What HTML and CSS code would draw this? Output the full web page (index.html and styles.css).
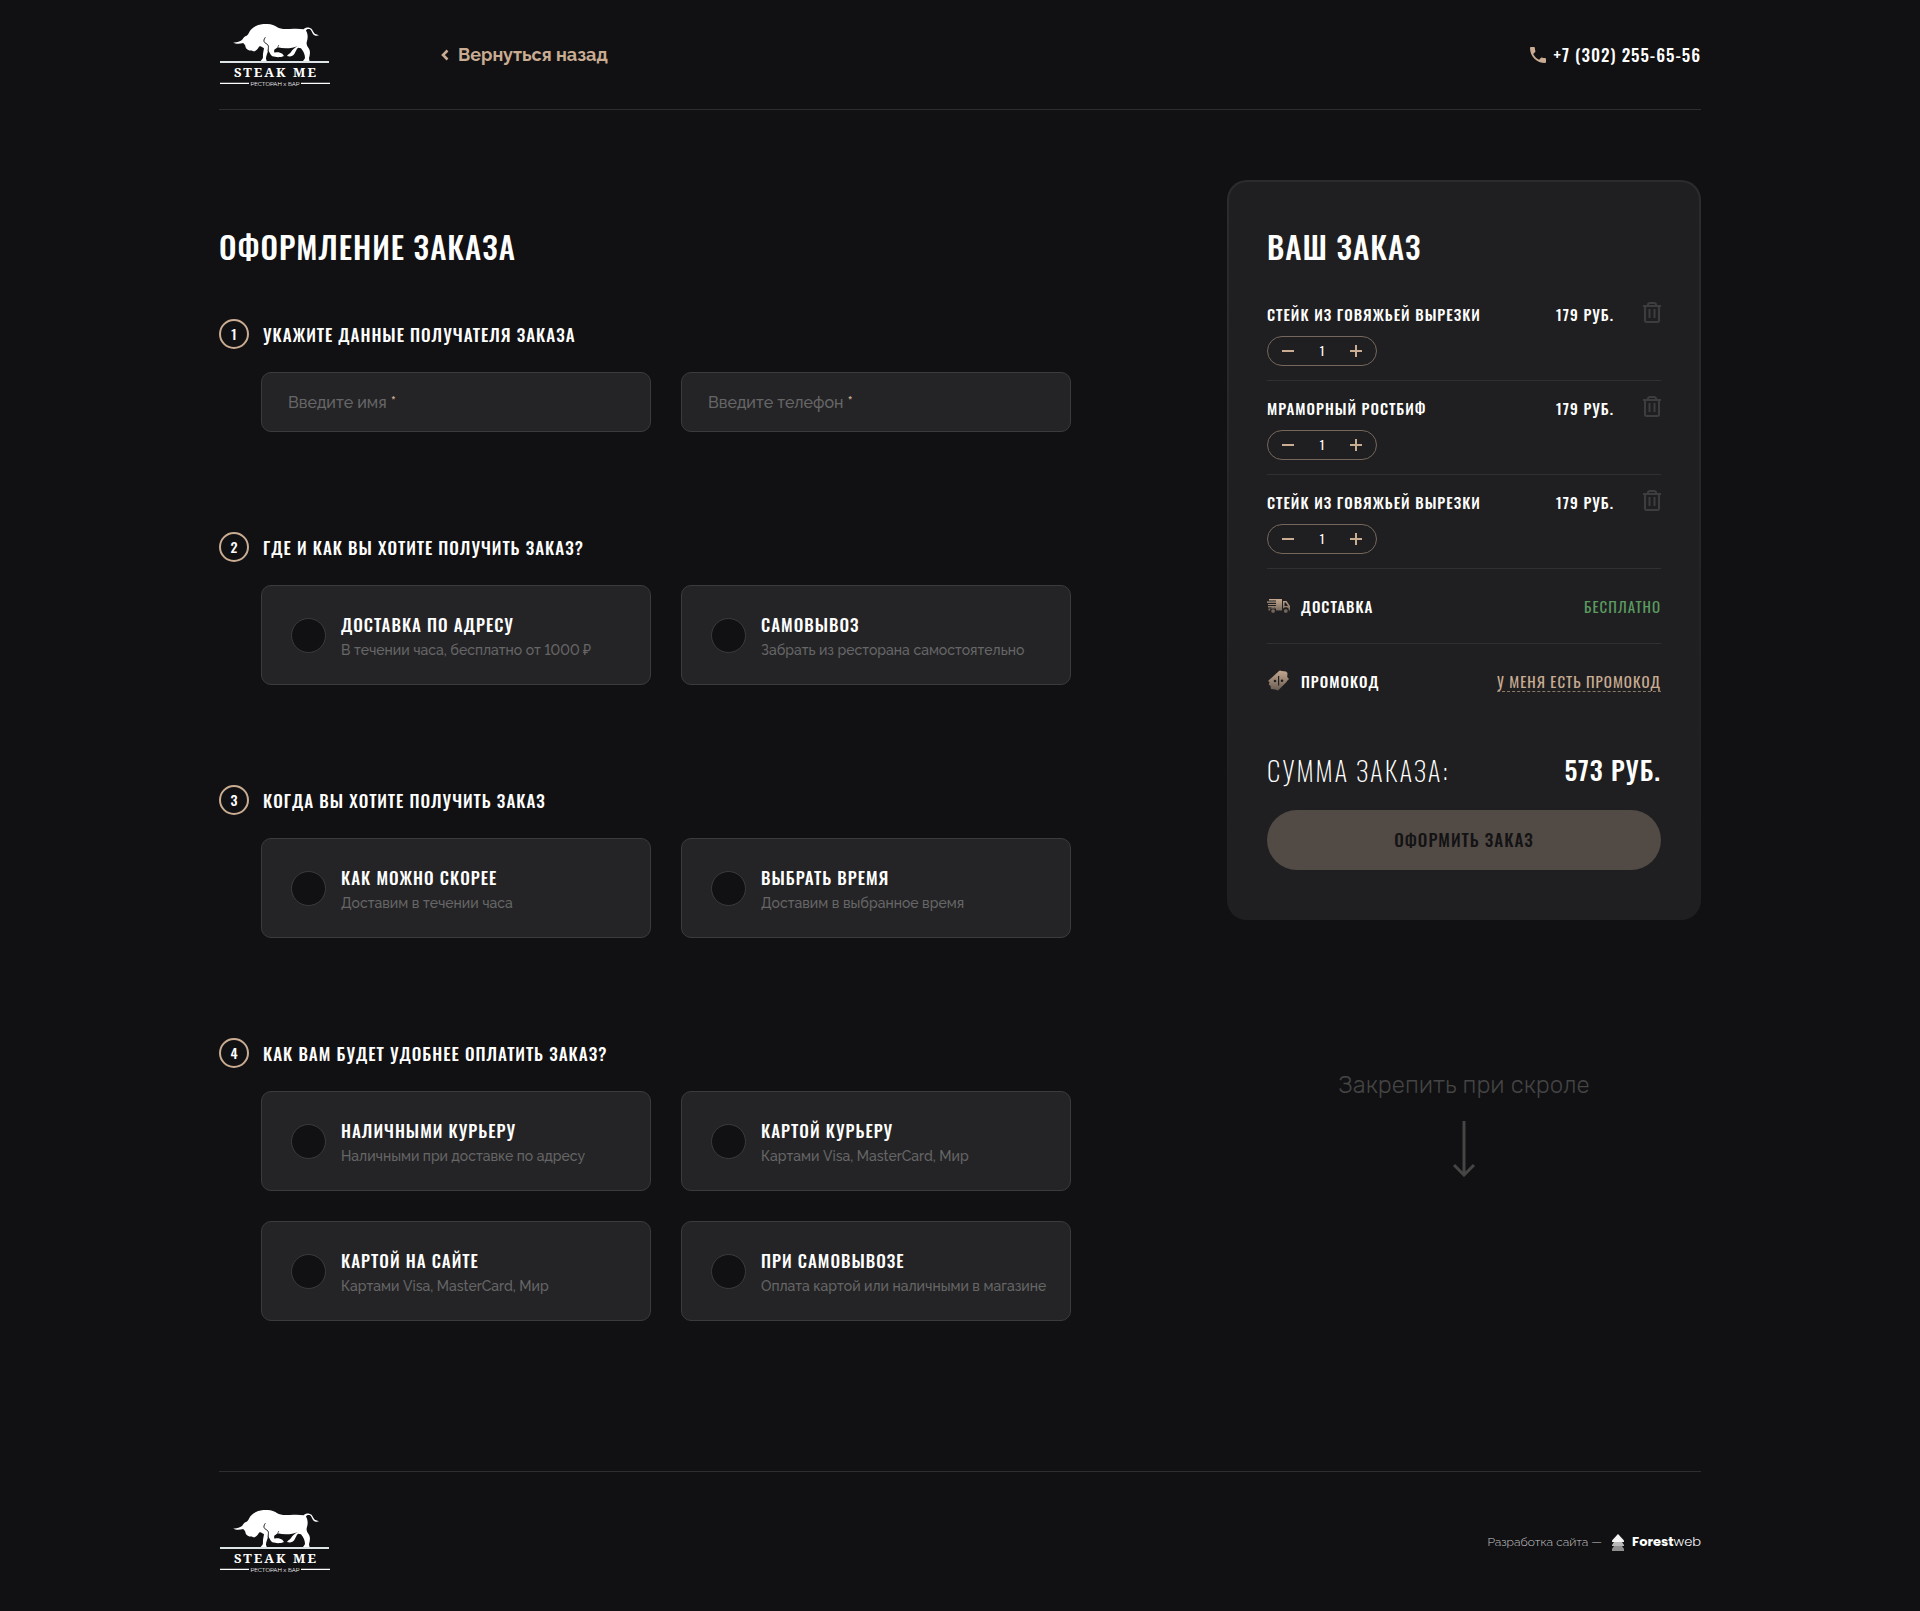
FILE: index.html
```
<!DOCTYPE html>
<html lang="ru">
<head>
<meta charset="utf-8">
<meta name="viewport" content="width=device-width, initial-scale=1">
<title>Оформление заказа — Steak Me</title>
<link rel="stylesheet" href="styles.css">
</head>
<body>
<svg class="sprite" aria-hidden="true">
  <defs>
    <linearGradient id="sand" x1="0" y1="0" x2="0" y2="1"><stop offset="0" stop-color="#c5a990"/><stop offset="1" stop-color="#675b51"/></linearGradient>
  </defs>
  <symbol id="bull" viewBox="0 0 112 64">
    <g transform="scale(.3333) translate(-27 -42)">
      <path fill="#fff" d="M69 97C78 99 88 95 96 90C99 87 101 82 106 79C112 77 115 72 118 66C124 54 139 44 160 42C178 41 192 44 202 52C208 57 222 58 240 57C256 56 270 56 281 58C284 54 291 52 298 53C309 55 309 68 316 72L327 76C320 79 312 77 309 72C305 65 304 57 296 57C291 57 289 59 288 62C294 70 294 84 291 93C288 102 291 108 296 115C302 124 300 134 297 145L299 155H278C279 150 285 148 285 143C285 133 280 124 273 115L264 113C259 118 257 125 253 132C249 139 240 141 231 138C233 133 240 132 243 126C247 118 255 113 263 108C247 116 222 117 203 112L196 117C192 119 191 124 194 128C203 125 211 128 217 131L222 138C211 143 198 142 187 139C181 134 178 127 175 121C172 130 168 139 168 146L171 155H151C153 150 159 148 159 141C158 132 161 122 162 115C155 111 153 107 147 110C142 118 138 124 129 124C126 119 121 124 115 120C109 117 106 112 106 107C105 104 101 102 100 99C89 102 77 103 69 97Z"/>
      <path fill="none" stroke="#111113" stroke-width="3" d="M166 82C158 93 163 98 169 101C178 106 175 113 174 124M204 110L206 106"/>
      <path stroke="#dde4e5" stroke-width="6" d="M30 156H357"/>
      <path stroke="#fff" stroke-width="4" d="M30 220H117M273 220H360"/>
    </g>
  </symbol>
  <symbol id="trash" viewBox="0 0 18 21">
    <path fill="none" stroke="currentColor" stroke-width="2" d="M0 4H18M5 4V2.500Q5 1 7 1H11Q13 1 13 2.500V4M2 4V18.500Q2 20 3.500 20H14.500Q16 20 16 18.500V4M6.500 7V16M11.500 7V16"/>
  </symbol>
</svg>

<div class="container">
  <header class="header">
    <a class="logo" href="#"><svg width="112" height="64" viewBox="0 0 112 64"><use href="#bull"/><text class="logo-name" x="57" y="53">STEAK ME</text><text class="logo-sub" x="56" y="62">РЕСТОРАН х БАР</text></svg></a>
    <a class="back" href="#">
      <svg width="8" height="12" viewBox="0 0 8 12"><path d="M6.500 1.500L2 6L6.500 10.500" fill="none" stroke="currentColor" stroke-width="2.600"/></svg>
      Вернуться назад
    </a>
    <a class="phone" href="tel:+73022556556">
      <svg width="16" height="16" viewBox="3 3 18 18"><path fill="#c9ac92" d="M6.620 10.790c1.440 2.830 3.760 5.140 6.590 6.590l2.200-2.200c.27-.27.670-.36 1.020-.24 1.120.37 2.330.57 3.570.57.550 0 1 .45 1 1V20c0 .55-.45 1-1 1-9.390 0-17-7.610-17-17 0-.55.450-1 1-1h3.500c.55 0 1 .45 1 1 0 1.250.2 2.450.57 3.570.11.350.03.740-.25 1.020l-2.200 2.200z"/></svg>
      <span>+7 (302) 255-65-56</span>
    </a>
  </header>

  <main class="checkout">
    <form class="form" id="order">
      <h1 class="title">Оформление заказа</h1>

      <section class="step">
        <h2 class="step-head"><span class="step-num">1</span><span class="step-name">Укажите данные получателя заказа</span></h2>
        <div class="cards">
          <div class="field"><input id="name" type="text" required placeholder=" "><label for="name">Введите имя <b>*</b></label></div>
          <div class="field"><input id="tel" type="tel" required placeholder=" "><label for="tel">Введите телефон <b>*</b></label></div>
        </div>
      </section>

      <section class="step">
        <h2 class="step-head"><span class="step-num">2</span><span class="step-name">Где и как вы хотите получить заказ?</span></h2>
        <div class="cards">
          <label class="option"><input type="radio" name="way"><span class="option-text"><span class="option-name">Доставка по адресу</span><span class="option-note">В течении часа, бесплатно от 1000 ₽</span></span></label>
          <label class="option"><input type="radio" name="way"><span class="option-text"><span class="option-name">Самовывоз</span><span class="option-note">Забрать из ресторана самостоятельно</span></span></label>
        </div>
      </section>

      <section class="step">
        <h2 class="step-head"><span class="step-num">3</span><span class="step-name">Когда вы хотите получить заказ</span></h2>
        <div class="cards">
          <label class="option"><input type="radio" name="time"><span class="option-text"><span class="option-name">Как можно скорее</span><span class="option-note">Доставим в течении часа</span></span></label>
          <label class="option"><input type="radio" name="time"><span class="option-text"><span class="option-name">Выбрать время</span><span class="option-note">Доставим в выбранное время</span></span></label>
        </div>
      </section>

      <section class="step">
        <h2 class="step-head"><span class="step-num">4</span><span class="step-name">Как вам будет удобнее оплатить заказ?</span></h2>
        <div class="cards">
          <label class="option"><input type="radio" name="pay"><span class="option-text"><span class="option-name">Наличными курьеру</span><span class="option-note">Наличными при доставке по адресу</span></span></label>
          <label class="option"><input type="radio" name="pay"><span class="option-text"><span class="option-name">Картой курьеру</span><span class="option-note">Картами Visa, MasterCard, Мир</span></span></label>
          <label class="option"><input type="radio" name="pay"><span class="option-text"><span class="option-name">Картой на сайте</span><span class="option-note">Картами Visa, MasterCard, Мир</span></span></label>
          <label class="option"><input type="radio" name="pay"><span class="option-text"><span class="option-name">При самовывозе</span><span class="option-note">Оплата картой или наличными в магазине</span></span></label>
        </div>
      </section>
    </form>

    <aside class="side">
      <section class="cart">
        <h2 class="title">Ваш заказ</h2>
        <ul class="items">
          <li class="item">
            <div class="item-row"><span class="item-name">Стейк из говяжьей вырезки</span><span class="item-price">179 руб.</span><button class="remove" type="button" aria-label="Удалить"><svg width="18" height="21"><use href="#trash"/></svg></button></div>
            <div class="qty"><button class="minus" type="button" aria-label="Меньше"></button><output>1</output><button class="plus" type="button" aria-label="Больше"></button></div>
          </li>
          <li class="item">
            <div class="item-row"><span class="item-name">Мраморный ростбиф</span><span class="item-price">179 руб.</span><button class="remove" type="button" aria-label="Удалить"><svg width="18" height="21"><use href="#trash"/></svg></button></div>
            <div class="qty"><button class="minus" type="button" aria-label="Меньше"></button><output>1</output><button class="plus" type="button" aria-label="Больше"></button></div>
          </li>
          <li class="item">
            <div class="item-row"><span class="item-name">Стейк из говяжьей вырезки</span><span class="item-price">179 руб.</span><button class="remove" type="button" aria-label="Удалить"><svg width="18" height="21"><use href="#trash"/></svg></button></div>
            <div class="qty"><button class="minus" type="button" aria-label="Меньше"></button><output>1</output><button class="plus" type="button" aria-label="Больше"></button></div>
          </li>
        </ul>
        <div class="extra extra-line">
          <svg width="24" height="16" viewBox="0 0 24 16"><path fill="url(#sand)" fill-rule="evenodd" d="M2 1H15V12.500H9.200A3 3 0 0 0 3 12.500H1.500V10.500H8V9.500H1V8H9V7H1V6H9V4.800H0V3.600H9V2.600H2ZM16 3H19.500L23 8V12.500H21.800A3 3 0 0 0 15.800 12H16ZM17.500 4.500V8H21L18.800 4.500ZM6.100 11.200A1.900 1.900 0 1 0 6.100 15A1.900 1.900 0 1 0 6.100 11.200ZM18.800 11.200A1.900 1.900 0 1 0 18.800 15A1.900 1.900 0 1 0 18.800 11.200Z"/></svg>
          <span>Доставка</span><span class="free">Бесплатно</span>
        </div>
        <div class="extra">
          <svg width="24" height="22" viewBox="0 0 24 22"><path fill="url(#sand)" d="M1 11L12 1Q13 0 14.500 1L19 1.500L20.500 3L20.200 7L22 9L20 11L19.500 12L11 20.500L8 19.500L4 19L3.500 16L1.800 14.500L2.500 12Z"/><path stroke="#1f1f21" stroke-width="1.200" d="M11.600 6V15.500"/><circle cx="8" cy="11" r="1.300" fill="#1f1f21"/><circle cx="15" cy="10.800" r="1.300" fill="#1f1f21"/></svg>
          <span>Промокод</span><a class="promo" href="#">У меня есть промокод</a>
        </div>
        <div class="total"><span class="total-label">Сумма заказа:</span><strong>573 руб.</strong></div>
        <button class="submit" type="submit" form="order">Оформить заказ</button>
      </section>
      <p class="note">Закрепить при скроле</p>
      <svg class="arrow" width="22" height="56" viewBox="0 0 22 56"><path fill="none" stroke="#454545" stroke-width="3" d="M11 0V54M1 44L11 54L21 44"/></svg>
    </aside>
  </main>

  <footer class="footer">
    <a class="logo" href="#"><svg width="112" height="64" viewBox="0 0 112 64"><use href="#bull"/><text class="logo-name" x="57" y="53">STEAK ME</text><text class="logo-sub" x="56" y="62">РЕСТОРАН х БАР</text></svg></a>
    <p class="dev">Разработка сайта —
      <a class="forest" href="#"><svg width="12" height="17" viewBox="0 0 12 17"><path fill="#8f8f8f" d="M2 12H10L12 15V17H0V15Z"/><path fill="#b9b9b9" d="M2 8H10L12 11V12H0V11Z"/><path fill="#f4f4f4" d="M6 0L12 6.500V8H0V6.500Z"/></svg><span><b>Forest</b>web</span></a>
    </p>
  </footer>
</div>
</body>
</html>
```
FILE: styles.css
```
* { box-sizing: border-box; }

:root {
  --bg: #111113;
  --panel: #242426;
  --line: #3b3b3c;
  --sand: #c9ac92;
  --display: Oswald, "Open Sans Condensed", "Roboto Condensed", Roboto, sans-serif;
  --text: Raleway, "Open Sans", sans-serif;
}

body {
  margin: 0;
  background: var(--bg);
  color: #fff;
  font: 500 14px/20px var(--text);
  font-feature-settings: "lnum" 1;
}

h1, h2, p, ul { margin: 0; padding: 0; }
ul { list-style: none; }
a { color: inherit; text-decoration: none; }
button { padding: 0; border: 0; background: none; color: inherit; cursor: pointer; }
svg { display: block; flex: none; }
.sprite { width: 0; height: 0; position: absolute; }

.container {
  max-width: 1522px;
  margin: 0 auto;
  padding: 0 20px;
}

.header {
  display: flex;
  align-items: center;
  padding: 24px 0 21px;
  border-bottom: 1px solid #2e2e2f;
}
.logo text { fill: #fff; text-anchor: middle; }
.logo-name { font: 700 13px "Noto Serif", "Liberation Serif", serif; letter-spacing: 2px; }
.logo-sub { font: 400 6px var(--text); }
.back {
  display: flex;
  align-items: center;
  gap: 9px;
  margin: 0 0 2px 110px;
  color: var(--sand);
  font-size: 18px;
  font-weight: 700;
}
.phone {
  display: flex;
  align-items: center;
  gap: 8px;
  margin: 0 0 2px auto;
  font: 500 17px/20px var(--display);
  letter-spacing: 1px;
}

.checkout {
  display: grid;
  grid-template-columns: minmax(0, 852px) minmax(0, 474px);
  justify-content: space-between;
  gap: 40px;
  padding: 70px 0 150px;
}

.title {
  font: 500 31px/40px var(--display);
  letter-spacing: 1px;
  text-transform: uppercase;
}
.form { padding-top: 46px; }
.form .title { margin-bottom: 53px; }
.step + .step { margin-top: 100px; }
.step-head {
  display: flex;
  align-items: center;
  gap: 14px;
  height: 30px;
  margin-bottom: 23px;
  font: 500 17px/30px var(--display);
  letter-spacing: 1px;
  text-transform: uppercase;
}
.step-name { padding-top: 2px; }
.step-num {
  width: 30px;
  border: 2px solid var(--sand);
  border-radius: 50%;
  font-size: 14px;
  line-height: 26px;
  letter-spacing: 0;
  text-align: center;
}
.cards {
  display: grid;
  grid-template-columns: 1fr 1fr;
  gap: 30px;
  padding-left: 42px;
}

.field {
  display: grid;
  height: 60px;
  border: 1px solid var(--line);
  border-radius: 10px;
  background: var(--panel);
}
.field input, .field label { grid-area: 1 / 1; padding: 0 26px; font: 500 16px/60px var(--text); }
.field input { width: 100%; height: 58px; border: 0; background: none; color: #fff; outline: 0; }
.field label { color: #666; pointer-events: none; }
.field b { color: var(--sand); font-weight: 500; }
.field input:not(:placeholder-shown) + label { visibility: hidden; }

.option {
  display: flex;
  align-items: center;
  gap: 15px;
  height: 100px;
  padding: 0 20px 0 29px;
  border: 1px solid var(--line);
  border-radius: 10px;
  background: var(--panel);
  cursor: pointer;
}
.option input {
  flex: none;
  appearance: none;
  width: 35px;
  height: 35px;
  margin: 0;
  border: 1px solid var(--line);
  border-radius: 50%;
  background: var(--bg);
}
.option input:checked { background: var(--sand); }
.option-text { display: grid; gap: 3px; padding-top: 2px; }
.option-name {
  font: 500 17px/24px var(--display);
  letter-spacing: 1px;
  text-transform: uppercase;
}
.option-note { color: #666; }

.cart {
  padding: 44px 38px 48px;
  border: 2px solid transparent;
  border-radius: 20px;
  background:
    linear-gradient(#1f1f21, #1f1f21) padding-box,
    linear-gradient(#2c2c2e, #1f1f21) border-box;
  font: 500 15px/20px var(--display);
  letter-spacing: 1px;
  text-transform: uppercase;
}
.items { margin-top: 21px; }
.item { padding: 15px 0 14px; border-bottom: 1px solid #303032; }
.item-row { display: flex; align-items: flex-start; height: 24px; line-height: 24px; }
.item-price { margin-left: auto; }
.remove { margin-left: 29px; color: #3d3d3f; }
.qty {
  display: flex;
  align-items: center;
  justify-content: space-between;
  width: 110px;
  height: 30px;
  margin-top: 10px;
  padding: 0 14px;
  border: 1px solid #75675b;
  border-radius: 15px;
  font-size: 12px;
  font-weight: 400;
  letter-spacing: 0;
}
.minus, .plus {
  width: 12px;
  height: 12px;
  background: linear-gradient(var(--sand), var(--sand)) center / 12px 2px no-repeat;
}
.plus {
  background:
    linear-gradient(var(--sand), var(--sand)) center / 12px 2px no-repeat,
    linear-gradient(var(--sand), var(--sand)) center / 2px 12px no-repeat;
}
.extra { display: flex; align-items: center; gap: 10px; height: 74px; }
.extra-line { height: 75px; border-bottom: 1px solid #303032; }
.extra > :last-child { margin-left: auto; font-weight: 400; }
.free { color: #5b9a60; }
.promo { color: var(--sand); border-bottom: 1px dashed #8a7868; }
.total {
  display: flex;
  justify-content: space-between;
  margin: 32px 0 20px;
  font-size: 27px;
  line-height: 40px;
}
.total-label { font-weight: 200; letter-spacing: 2px; }
.total strong { font-size: 26px; font-weight: 500; }
.submit {
  width: 100%;
  height: 60px;
  border-radius: 30px;
  background: #524a44;
  color: #131315;
  font: 500 17px/20px var(--display);
  letter-spacing: 1px;
  text-transform: uppercase;
}
.note {
  margin: 148px 0 19px;
  color: #454545;
  font: 300 24px/34px Rubik, "Open Sans", sans-serif;
  text-align: center;
}
.arrow { margin: 0 auto; }

.footer {
  display: flex;
  align-items: center;
  justify-content: space-between;
  padding: 38px 0 37px;
  border-top: 1px solid #2e2e2f;
}
.dev {
  display: flex;
  align-items: center;
  gap: 10px;
  color: #c8c8c8;
  font-size: 12px;
  font-weight: 300;
}
.forest { display: flex; align-items: center; gap: 8px; color: #fff; font: 300 13px/20px Poppins, Montserrat, Inter, sans-serif; }
.forest b { font-weight: 700; }
```
